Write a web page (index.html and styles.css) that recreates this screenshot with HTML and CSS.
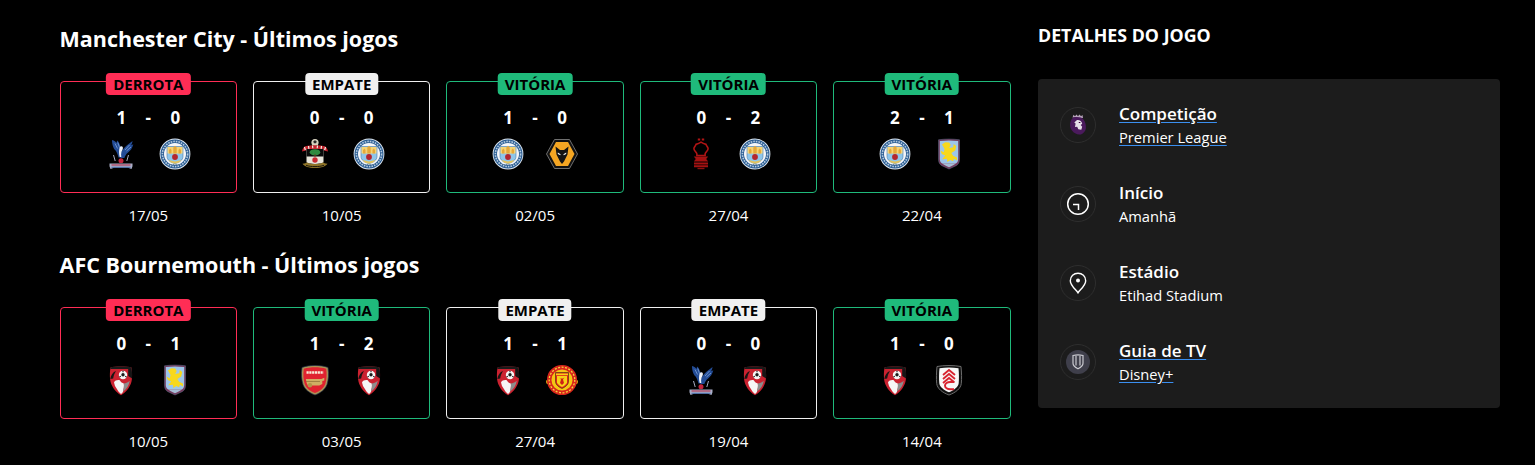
FILE: index.html
```html
<!DOCTYPE html>
<html lang="pt">
<head>
<meta charset="utf-8">
<title>Detalhes do jogo</title>
<link rel="stylesheet" href="styles.css">
</head>
<body>
<svg class="sprite" aria-hidden="true">
  <defs>
    <symbol id="city" viewBox="0 0 32 32">
      <circle cx="16" cy="16" r="15.4" fill="#dfe8f1"/>
      <circle cx="16" cy="16" r="14.5" fill="#2a5c92"/>
      <circle cx="16" cy="16" r="12.6" fill="none" stroke="#b4cbe0" stroke-width="1.6" stroke-dasharray="1.6 1"/>
      <circle cx="16" cy="16" r="11" fill="#f4f6f9"/>
      <path d="M8 8.500h16v10c0 3.600-3.600 5.800-8 7.200-4.400-1.400-8-3.600-8-7.200z" fill="#8fc6ea" stroke="#4a7aa8" stroke-width=".6"/>
      <path d="M8.500 9h15v6.500h-15z" fill="#f6d374"/>
      <path d="M10 15.500v-3.500l1.500-1.500 1 1.500v3.500zM14.300 15.500V9.500l1.700-1.700 1.700 1.700v6zM19.500 15.500V12l1.300-1.500 1.200 1.500v3.500z" fill="#e5a93a"/>
      <circle cx="16" cy="19" r="2.900" fill="#b3252f"/>
      <path d="M9.500 22l6.500 1.500 6.500-1.500-2.300 2.400-4.200 1.300-4.200-1.300z" fill="#e3c45e"/>
      <path d="M10.500 26.500h11" stroke="#5c7e9f" stroke-width="1.100" stroke-dasharray="1 .7"/>
    </symbol>
    <symbol id="palace" viewBox="0 0 32 32">
      <path d="M7 2c2.300.6 3.700 1.600 4.600 3 0-1 .2-1.800.7-2.600 1.500 1.500 2.500 3.700 3 5.700l1.700 4.500-1.500 7h-2c-.7-3-1.500-5-2.900-7C8.700 11 7 6.500 7 2z" fill="#234c96"/>
      <path d="M27.500 3c-.2 1.800-.6 3-1.400 4.200.9-.1 1.500-.4 2.200-.9-.8 3.700-2.900 6.500-5.500 8.400-1.700 1.400-2.900 3.200-3.400 5.300h-4c-.4-2.500.5-5.300 1.800-7.400 2.200-3.800 6.500-6.600 10.300-9.600z" fill="#234c96"/>
      <path d="M10 5.500l2.500 5M12.800 4.500l1.700 5M24.500 7l-4.500 5M26 9l-4.500 4" stroke="#7fa2d6" stroke-width=".8"/>
      <path d="M14.600 9.500c.9-1.500 2.700-1.600 3.200-.2.400 1.400-.5 3-1.300 4.500-.5 1.700-.5 3.500-.2 5.200h-1.600c-.9-3.500-.9-6.500-.1-9.500z" fill="#eef2f8"/>
      <path d="M8.500 17l1.700 6M23.500 17l-1.700 6" stroke="#a7abc0" stroke-width="1"/>
      <circle cx="16" cy="22.800" r="2.500" fill="#c3243c"/>
      <path d="M4.500 25.500h23v2.800l-1 2.700-3.500-1.300H9L5.500 31l-1-2.700z" fill="#a9aec8"/>
      <path d="M6.500 27h19" stroke="#b5334f" stroke-width="1.100"/>
      <path d="M6.500 29.300h19" stroke="#3c65a8" stroke-width=".9"/>
    </symbol>
    <symbol id="southampton" viewBox="0 0 32 32">
      <circle cx="16" cy="4.500" r="3.600" fill="#d8d3c0"/>
      <path d="M14.300 3.300L16 2.300l1.700 1-.6 2h-2.200z" fill="#2a2a2a"/>
      <path d="M3 13.500c.4-2.500 1.500-4.500 3.300-5.300 3.300-.8 6.500-1 9.700-1s6.400.2 9.700 1c1.800.8 2.900 2.800 3.300 5.300l-4-1-1.800-1H8.800l-1.800 1z" fill="#c4242e"/>
      <path d="M5.500 9l.8 3M9.500 8l.4 2.800M13.500 7.500l.3 2.800M18.500 7.500l-.3 2.800M22.500 8l-.4 2.800M26.500 9l-.8 3" stroke="#f3f0e6" stroke-width="1.200"/>
      <path d="M7.500 11h17v12.500c0 1.300-1 2.200-8.500 2.400-7.500-.2-8.500-1.100-8.500-2.400z" fill="#e8e5da"/>
      <path d="M7.500 11h17v7.500h-17z" fill="#0b0b0b"/>
      <ellipse cx="16" cy="14.300" rx="5.300" ry="3.100" fill="#2f8a40"/>
      <path d="M15.200 16.500h1.600v2h-1.600z" fill="#5b3a1e"/>
      <circle cx="16" cy="22" r="2.700" fill="#c92a33"/>
      <path d="M3.500 25.800c2.500-.4 3.500-.9 4.400-1.400 2.700 1.100 5 1.700 8.100 1.700s5.400-.6 8.100-1.700c.9.500 1.900 1 4.400 1.400-2 2.800-5.800 4.200-12.500 4.200S5.500 28.600 3.500 25.800z" fill="#8f7428"/>
      <path d="M7 27.300c2.800 1 5.500 1.300 9 1.300s6.200-.3 9-1.300" fill="none" stroke="#1e1a0c" stroke-width="1"/>
    </symbol>
    <symbol id="wolves" viewBox="0 0 32 32">
      <path d="M8.500 1.500h15L31.500 16l-8 14.500h-15L.5 16z" fill="#121212" stroke="#6f6f6f" stroke-width="1"/>
      <path d="M10 4h12l6.500 12-6.500 12H10L3.500 16z" fill="#f5a623"/>
      <path d="M9.500 8.500l4.500 3.500h4l4.500-3.500-1 8-3.500 7-2 2.500-2-2.500-3.500-7z" fill="#141414"/>
      <path d="M11.800 14.500l2.800 1.800-.3.900-2.500-1.200zM20.200 14.500l-2.800 1.800.3.900 2.500-1.200z" fill="#f3f3f3"/>
    </symbol>
    <symbol id="forest" viewBox="0 0 32 32">
      <path d="M12.800 1.500h2.400M16.800 1.500h2.400" stroke="#b01414" stroke-width="2.200"/>
      <path d="M16 4.200c1.700 1.200 3.400 1.800 5 2.200.3 1.600 2.100 2.500 2.100 4.400 0 1.600-1.800 2.900-2.700 4.300-.4.800-.4 1.400-.3 2.400h-8.200c.1-1 .1-1.600-.3-2.400-.9-1.400-2.700-2.700-2.700-4.300 0-1.900 1.800-2.800 2.100-4.400 1.600-.4 3.300-1 5-2.200z" fill="none" stroke="#b01414" stroke-width="1.600"/>
      <path d="M8.800 18.500h14.400l-2 2.500 2 2.500H8.800l2-2.500z" fill="#a51212"/>
      <path d="M9 24.500h14v1.900H9zM9 27.300h14v1.900H9z" fill="#a51212"/>
      <path d="M12.500 29.800h7v1.400h-7z" fill="#8e1010"/>
    </symbol>
    <symbol id="villa" viewBox="0 0 32 32">
      <path d="M5.500 1.800c7-1 14-1 21 0L26.500 21c0 3.500-1 5-3 6.500L16 31l-7.500-3.500c-2-1.500-3-3-3-6.500z" fill="#74385a" stroke="#5d6f8e" stroke-width=".5"/>
      <path d="M6.800 3c6.100-.7 12.300-.7 18.400 0v17.500c0 2.500-.7 3.700-2 4.700H8.800c-1.300-1-2-2.200-2-4.700z" fill="#9dc6ea"/>
      <path d="M8.800 25.200h14.400c-1.800 1.500-4 2.700-7.200 4.100-3.200-1.400-5.400-2.600-7.200-4.100z" fill="#a7bed6"/>
      <path d="M9 6.500l3.200-2.300 4 .4 1.500 2.500-1.500 3 4-.8.500-3.200 2.500 1.800-1 4.500-3.800 2.500 1.700 2.800 3.800 1.800.3 3-3.400-1.700-.6 2.500-3-1.300-2.800 2-.5-3.300-4.700.5 3-3.800-3.400-1.300-1.400-3.700 3.300 1.800.9-3.200z" fill="#f8d81c"/>
    </symbol>
    <symbol id="bournemouth" viewBox="0 0 32 32">
      <path d="M5.500 3.500C9 2.200 23 2.200 26.500 3.500c.6 3.500.8 8 .4 11.800-.8 6.500-4.600 12-10.900 16-6.300-4-10.100-9.500-10.900-16-.4-3.800-.2-8.300.4-11.800z" fill="#cb2230"/>
      <path d="M5.500 3.500C9 2.200 23 2.200 26.500 3.500l.2 1.500H5.300z" fill="#1a1a1a"/>
      <path d="M23.200 5h3.500c.4 3 .5 6.500.4 9.500l-3.900-2.500z" fill="#151515"/>
      <path d="M5.300 15c.5-4 2.700-7 5.700-8-1.700 2.500-2.500 5-2.800 7.500z" fill="#1a1414"/>
      <circle cx="18" cy="11" r="4.200" fill="#f6f6f6"/>
      <circle cx="18" cy="10.800" r="1.700" fill="#1c1c1c"/>
      <path d="M18 6.800v1.400M14.500 13l1.300-.9M21.500 13l-1.300-.9" stroke="#1c1c1c" stroke-width="1.100"/>
      <path d="M9 18.500c1-2 3.500-2.800 5.800-2.200 1 1.800 2.400 2.900 4 3.300.5 3-.2 5.700-.9 8.300-.6.800-1.200 1.500-1.900 2.100-1.500-1-2.800-2.700-3.600-4.200l-2.400-3.800z" fill="#f6f6f6"/>
      <path d="M18.800 19.600c2-.2 3.500-.9 6-2.800-.8 4.500-3 8.200-6.900 11 .7-2.700 1.400-5.300.9-8.200z" fill="#8d8d8d"/>
    </symbol>
    <symbol id="arsenal" viewBox="0 0 32 32">
      <path d="M3 3.500C10 .8 22 .8 29 3.500c1 7 .5 12-1 17-1.800 5-6.500 8.500-12 10.500-5.500-2-10.200-5.500-12-10.500-1.500-5-2-10-1-17z" fill="#a99355" stroke="#25304a" stroke-width=".7"/>
      <path d="M4.800 4.800c7-2 15.400-2 22.400 0 .8 6 .4 10.700-.9 15.200-1.600 4.300-5.600 7.200-10.300 9-4.700-1.800-8.700-4.700-10.300-9-1.300-4.500-1.700-9.200-.9-15.200z" fill="#e0222f"/>
      <path d="M7.500 8.500h17" stroke="#f8ecd8" stroke-width="2.400" stroke-dasharray="2.200 .6"/>
      <path d="M6.800 15h15.500l3-1.300v2.800l-2 .5v3l-3 1.500h-8.300l-2.500 1-1.700-3z" fill="#cfae63"/>
      <circle cx="11" cy="21.300" r="2.200" fill="#b3934a"/>
      <path d="M7 17.500h14" stroke="#8d6f33" stroke-width=".7"/>
    </symbol>
    <symbol id="united" viewBox="0 0 32 32">
      <circle cx="16" cy="16" r="13.500" fill="#f4c514"/>
      <circle cx="2.600" cy="17.800" r="2.500" fill="#e8b410"/>
      <circle cx="29.400" cy="17.800" r="2.500" fill="#e8b410"/>
      <circle cx="16" cy="16" r="12.800" fill="none" stroke="#d8261c" stroke-width="4.500"/>
      <circle cx="16" cy="16" r="12.800" fill="none" stroke="#f6d43a" stroke-width="1.300" stroke-dasharray="2 1.500"/>
      <path d="M9.500 8.500h13v9c0 3-3 5.500-6.500 7-3.500-1.500-6.500-4-6.500-7z" fill="#e2231a" stroke="#1a1a1a" stroke-width=".5"/>
      <path d="M11 12h10v7c-1 1.500-3 3-5 4-2-1-4-2.500-5-4z" fill="#f7d117"/>
      <path d="M13.500 13.500l1.500 2-1 3.500 2 2 2-2-1-3.500 1.500-2-1.500 1h-3z" fill="#d01e16"/>
      <path d="M10 9.500h12v1.700H10z" fill="#f7d117"/>
    </symbol>
    <symbol id="fulham" viewBox="0 0 32 32">
      <path d="M4 2.500c7-1.300 17-1.300 24 0 .6 6 .8 12 .3 17-.5 5-5.500 9-12.300 11.500C9.200 28.500 4.200 24.500 3.700 19.500 3.200 14.500 3.400 8.500 4 2.500z" fill="#111" stroke="#777" stroke-width=".9"/>
      <path d="M6.500 4.200c6-.8 13-.8 19 0 .5 5 .6 10.500.2 15-.5 3.800-4.500 6.800-9.700 9-5.200-2.200-9.200-5.200-9.700-9-.4-4.500-.3-10 .2-15z" fill="#f7f7f7"/>
      <path d="M10 11l6-5 6 5M10 15l6-5 6 5M10 19l6-5 5 4" fill="none" stroke="#d8232f" stroke-width="1.800"/>
      <path d="M21.500 18h-4.200c-3 0-5.300 1.500-5.300 3.600s2.300 3.600 5.300 3.600h3.700" fill="none" stroke="#d8232f" stroke-width="2"/>
    </symbol>
  </defs>
</svg>

<main class="page">
  <div class="history">
    <section class="team">
      <h2 class="team-title">Manchester City - Últimos jogos</h2>
      <div class="results">
        <article class="result">
          <div class="card card-loss"><span class="badge badge-loss">DERROTA</span>
            <div class="fixture"><b>1</b><b>-</b><b>0</b>
              <svg class="crest"><use href="#palace"/></svg><i></i><svg class="crest"><use href="#city"/></svg></div></div>
          <p class="date">17/05</p>
        </article>
        <article class="result">
          <div class="card card-draw"><span class="badge badge-draw">EMPATE</span>
            <div class="fixture"><b>0</b><b>-</b><b>0</b>
              <svg class="crest"><use href="#southampton"/></svg><i></i><svg class="crest"><use href="#city"/></svg></div></div>
          <p class="date">10/05</p>
        </article>
        <article class="result">
          <div class="card card-win"><span class="badge badge-win">VITÓRIA</span>
            <div class="fixture"><b>1</b><b>-</b><b>0</b>
              <svg class="crest"><use href="#city"/></svg><i></i><svg class="crest"><use href="#wolves"/></svg></div></div>
          <p class="date">02/05</p>
        </article>
        <article class="result">
          <div class="card card-win"><span class="badge badge-win">VITÓRIA</span>
            <div class="fixture"><b>0</b><b>-</b><b>2</b>
              <svg class="crest"><use href="#forest"/></svg><i></i><svg class="crest"><use href="#city"/></svg></div></div>
          <p class="date">27/04</p>
        </article>
        <article class="result">
          <div class="card card-win"><span class="badge badge-win">VITÓRIA</span>
            <div class="fixture"><b>2</b><b>-</b><b>1</b>
              <svg class="crest"><use href="#city"/></svg><i></i><svg class="crest"><use href="#villa"/></svg></div></div>
          <p class="date">22/04</p>
        </article>
      </div>
    </section>
    <section class="team">
      <h2 class="team-title">AFC Bournemouth - Últimos jogos</h2>
      <div class="results">
        <article class="result">
          <div class="card card-loss"><span class="badge badge-loss">DERROTA</span>
            <div class="fixture"><b>0</b><b>-</b><b>1</b>
              <svg class="crest"><use href="#bournemouth"/></svg><i></i><svg class="crest"><use href="#villa"/></svg></div></div>
          <p class="date">10/05</p>
        </article>
        <article class="result">
          <div class="card card-win"><span class="badge badge-win">VITÓRIA</span>
            <div class="fixture"><b>1</b><b>-</b><b>2</b>
              <svg class="crest"><use href="#arsenal"/></svg><i></i><svg class="crest"><use href="#bournemouth"/></svg></div></div>
          <p class="date">03/05</p>
        </article>
        <article class="result">
          <div class="card card-draw"><span class="badge badge-draw">EMPATE</span>
            <div class="fixture"><b>1</b><b>-</b><b>1</b>
              <svg class="crest"><use href="#bournemouth"/></svg><i></i><svg class="crest"><use href="#united"/></svg></div></div>
          <p class="date">27/04</p>
        </article>
        <article class="result">
          <div class="card card-draw"><span class="badge badge-draw">EMPATE</span>
            <div class="fixture"><b>0</b><b>-</b><b>0</b>
              <svg class="crest"><use href="#palace"/></svg><i></i><svg class="crest"><use href="#bournemouth"/></svg></div></div>
          <p class="date">19/04</p>
        </article>
        <article class="result">
          <div class="card card-win"><span class="badge badge-win">VITÓRIA</span>
            <div class="fixture"><b>1</b><b>-</b><b>0</b>
              <svg class="crest"><use href="#bournemouth"/></svg><i></i><svg class="crest"><use href="#fulham"/></svg></div></div>
          <p class="date">14/04</p>
        </article>
      </div>
    </section>
  </div>

  <aside class="details">
    <h2 class="details-title">DETALHES DO JOGO</h2>
    <div class="panel">
      <a class="row row-link" href="#">
        <span class="icon">
          <svg width="18" height="22" viewBox="0 0 18 22">
            <path d="M3.500 3.500L4.500 .8l1.500 1.400L7.500.6l1.500 1.600L10.500.6l1.500 1.600L13.500 1l.5 3z" fill="#b7a4bb"/>
            <path d="M4 3.500C8 2.500 12.500 3 14.500 5.500c2 2.600 2.600 6 2.400 8.700-.2 2.800-2.500 5.400-5 6.200-1.700.4-3.900.2-5.300-.8C3.500 18 1.400 15 1.100 12 .8 9 1.700 5.500 4 3.500z" fill="#4a1a5c"/>
            <path d="M8 6c2.200-.5 5 1 5.200 3.700l-1.500 1.300 1.500 1.800-.9 3-3-.6-1.100-2.400-2.200.3.600-3.500-1.300-1z" fill="#e6dfe8"/>
            <path d="M9.800 8.500h1.600" stroke="#37003c" stroke-width="1"/>
          </svg>
        </span>
        <span class="copy"><strong>Competição</strong><em>Premier League</em></span>
      </a>
      <div class="row">
        <span class="icon">
          <svg width="24" height="24" viewBox="0 0 24 24" fill="none" stroke="#fff">
            <circle cx="12" cy="12" r="10.300" stroke-width="1.500"/>
            <path d="M7 12.500h5.500V18" stroke-width="1.500"/>
          </svg>
        </span>
        <span class="copy"><strong>Início</strong><em>Amanhã</em></span>
      </div>
      <div class="row">
        <span class="icon">
          <svg width="18" height="22" viewBox="0 0 18 22" fill="none">
            <path d="M9 20.800c-1.700-2.800-7.700-7.200-7.700-12.100C1.300 4.300 4.800 1.200 9 1.200s7.700 3.100 7.700 7.500c0 4.900-6 9.300-7.700 12.100z" stroke="#fff" stroke-width="1.400"/>
            <circle cx="9" cy="8.500" r="2" fill="#fff"/>
          </svg>
        </span>
        <span class="copy"><strong>Estádio</strong><em>Etihad Stadium</em></span>
      </div>
      <a class="row row-link" href="#">
        <span class="icon">
          <span class="tv-disc">
            <svg width="12" height="16" viewBox="0 0 12 16" fill="none" stroke="#c9c9cf" stroke-width="1.200">
              <path d="M1 1.500c3-.8 7-.8 10 0v7.700c0 2.500-2.500 4.300-5 5.600-2.500-1.300-5-3.100-5-5.600z"/>
              <path d="M4 2v9.500M8 2v9.500"/>
            </svg>
          </span>
        </span>
        <span class="copy"><strong>Guia de TV</strong><em>Disney+</em></span>
      </a>
    </div>
  </aside>
</main>
</body>
</html>
```
FILE: styles.css
```css
* { box-sizing: border-box; }

html, body {
  margin: 0;
  background: #000;
}

body {
  color: #fff;
  font-family: "Open Sans", "Noto Sans", "Liberation Sans", sans-serif;
  overflow: hidden;
}

.sprite {
  display: none;
}

.page {
  display: flex;
  gap: 27.4px;
  padding: 0 35px 0 59.6px;
}

.history {
  display: flex;
  flex-direction: column;
  gap: 25px;
  width: 951px;
  padding-top: 24px;
}

.team-title {
  margin: 0 0 27px;
  font-size: 21.5px;
  font-weight: 700;
  line-height: 30px;
}

.results {
  display: grid;
  grid-template-columns: repeat(5, 1fr);
  gap: 16px;
}

.card {
  position: relative;
  display: flex;
  justify-content: center;
  height: 112px;
  padding-top: 24px;
  border: 1px solid;
  border-radius: 4px;
}

.card-loss { border-color: #ff2d55; }
.card-win { border-color: #1fba7b; }
.card-draw { border-color: #f0f0f0; }

.badge {
  position: absolute;
  top: -9px;
  left: 50%;
  transform: translateX(-50%);
  padding: 0 7px;
  border-radius: 4px;
  color: #000;
  font-size: 15px;
  font-weight: 700;
  line-height: 22px;
  white-space: nowrap;
}

.badge-loss { background: #ff2d55; }
.badge-win { background: #1fba7b; }
.badge-draw { background: #f0f0f0; }

.fixture {
  display: grid;
  grid-template-columns: 32px 22px 32px;
  grid-template-rows: 24px 32px;
  row-gap: 8px;
  justify-items: center;
  align-items: center;
}

.fixture b {
  font-size: 17px;
  font-weight: 700;
  line-height: 24px;
}

.crest {
  display: block;
  width: 32px;
  height: 32px;
}

.date {
  margin: 12px 0 0;
  font-size: 15px;
  line-height: 20px;
  text-align: center;
}

.details {
  width: 462px;
  padding-top: 23px;
}

.details-title {
  margin: 0 0 32px;
  font-size: 17.8px;
  font-weight: 700;
  line-height: 24px;
}

.panel {
  display: flex;
  flex-direction: column;
  gap: 32px;
  padding: 22px 22px 23px;
  border-radius: 4px;
  background: #1c1c1c;
}

.row {
  display: flex;
  align-items: center;
  gap: 23px;
  height: 47px;
  color: #fff;
  text-decoration: none;
}

.icon {
  display: flex;
  align-items: center;
  justify-content: center;
  flex: none;
  width: 36px;
  height: 36px;
  border: 1px solid #2e2e2e;
  border-radius: 50%;
}

.tv-disc {
  display: flex;
  align-items: center;
  justify-content: center;
  width: 24px;
  height: 24px;
  border-radius: 50%;
  background: #3f3f4b;
}

.copy {
  display: flex;
  flex-direction: column;
  align-items: flex-start;
  padding-top: 2px;
}

.copy strong {
  font-size: 17px;
  font-weight: 600;
  line-height: 24px;
}

.copy em {
  font-size: 14.7px;
  font-style: normal;
  line-height: 23px;
}

.row-link strong,
.row-link em {
  text-decoration: underline;
  text-decoration-color: #3b8ff0;
  text-underline-offset: 2px;
}
```
